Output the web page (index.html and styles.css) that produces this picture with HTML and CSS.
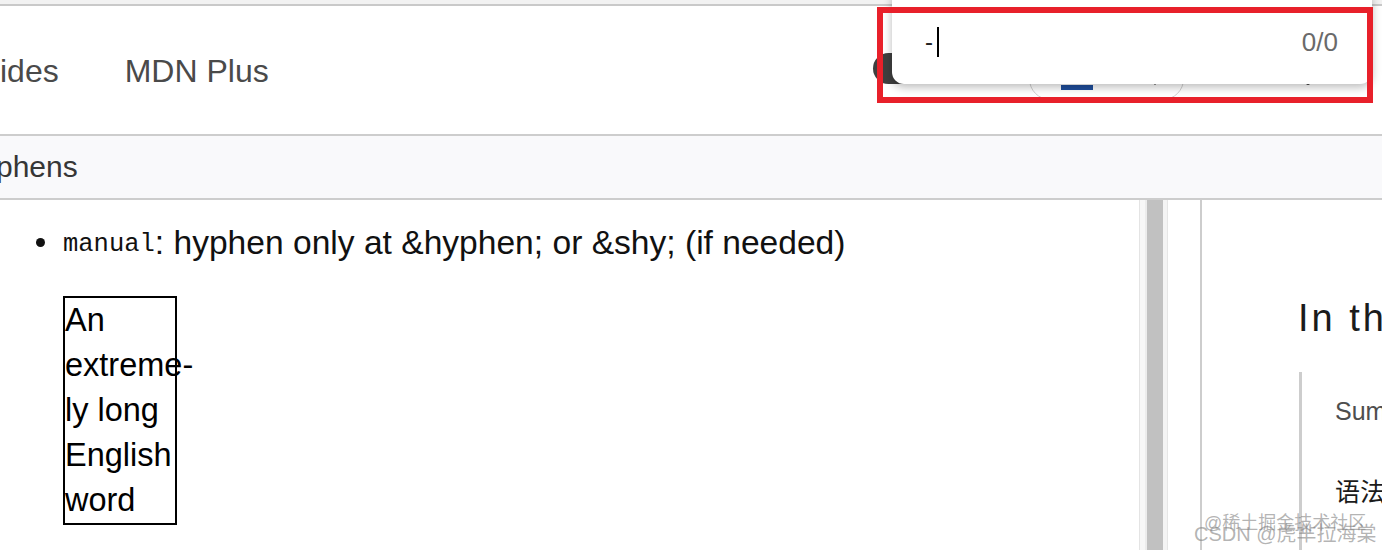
FILE: index.html
```html
<!DOCTYPE html>
<html lang="zh-CN">
<head>
<meta charset="utf-8">
<title>hyphens</title>
<link rel="stylesheet" href="styles.css">
</head>
<body>
<div class="page">
  <div class="topstrip"></div>
  <header class="header">
    <nav class="nav">
      <a class="nav-item">ides</a>
      <a class="nav-item plus">MDN Plus</a>
    </nav>
    <div class="theme-btn"></div>
    <div class="lang-pill"><span class="flag-bar"></span><span class="pill-dot"></span></div>
    <span class="user-dot"></span>
  </header>
  <div class="crumbbar"><span class="crumb">phens</span></div>
  <main class="main">
    <section class="content">
      <ul class="list">
        <li class="item"><span class="bullet"></span><code class="code">manual</code><span>: hyphen only at &amp;hyphen; or &amp;shy; (if needed)</span></li>
      </ul>
      <div class="demo">An extreme&shy;ly long English word</div>
    </section>
    <div class="scrollbar"><span class="sb-track"></span><span class="sb-thumb"></span><span class="sb-edge"></span></div>
    <aside class="sidebar">
      <h2 class="toc-title">In this article</h2>
      <ul class="toc">
        <li class="toc-item">Summary</li>
        <li class="toc-item cjk">语法</li>
      </ul>
    </aside>
  </main>

  <div class="findbar">
    <span class="find-text">-</span><span class="caret"></span>
    <span class="find-count">0/0</span>
  </div>
  <div class="highlight"></div>
  <div class="watermark">
    <span class="wm wm1">@稀土掘金技术社区</span>
    <span class="wm wm2">CSDN @虎芈拉海棠</span>
  </div>
</div>
</body>
</html>
```
FILE: styles.css
```css
* { box-sizing: border-box; }
html, body { margin: 0; padding: 0; }
body {
  width: 1382px;
  height: 550px;
  overflow: hidden;
  background: #ffffff;
  font-family: "Liberation Sans", Arial, "Noto Sans CJK SC", sans-serif;
  color: #1b1b1b;
}
.page { position: relative; width: 1382px; height: 550px; overflow: hidden; }

.topstrip {
  height: 6px;
  background: #f2f2f2;
  border-bottom: 2px solid #c9c9c9;
}

.header {
  height: 130px;
  border-bottom: 2px solid #cdcdcd;
  display: flex;
  align-items: center;
}
.nav { display: flex; align-items: center; gap: 66px; }
.nav-item {
  font-size: 32px;
  color: #4a4a4a;
  text-decoration: none;
  margin-top: 2px;
}
.theme-btn {
  margin-left: 604px;
  width: 44px;
  height: 31px;
  border-radius: 16px;
  background: #3f3f3f;
  margin-top: -4px;
}
.lang-pill {
  margin-left: 112px;
  width: 155px;
  height: 42px;
  border: 1.5px solid #cfcfcf;
  border-radius: 21px;
  display: flex;
  align-items: flex-end;
  margin-top: 18px;
  padding-left: 31px;
}
.flag-bar {
  width: 32px;
  height: 5px;
  background: #1f4e9c;
  margin-bottom: 9px;
}
.pill-dot {
  width: 2px;
  height: 2px;
  background: #999;
  margin-left: 61px;
  margin-bottom: 14px;
}
.user-dot {
  margin-left: 122px;
  width: 4px;
  height: 4px;
  border-radius: 50%;
  background: #333;
  margin-top: 26px;
}

.crumbbar {
  height: 64px;
  background: #f9f9fb;
  border-bottom: 2px solid #cdcdcd;
  line-height: 62px;
}
.crumb {
  display: inline-block;
  margin-left: -4px;
  font-size: 30px;
  color: #363636;
}

.main { display: flex; height: 350px; }
.content { width: 1139px; flex: 0 0 1139px; }
.list { list-style: none; margin: 18px 0 0 0; padding: 0; }
.item {
  display: flex;
  align-items: center;
  line-height: 45px;
  font-size: 33.6px;
  color: #111;
  white-space: nowrap;
}
.bullet {
  width: 9px;
  height: 9px;
  border-radius: 50%;
  background: #111;
  margin-left: 36px;
  margin-right: 18px;
}
.code {
  font-family: "Liberation Mono", "Courier New", monospace;
  font-size: 25.5px;
  margin-top: 4px;
}
.demo {
  margin: 29px 0 0 63px;
  width: 114px;
  border: 2px solid #000;
  font-size: 32.5px;
  line-height: 45px;
  color: #000;
  hyphens: manual;
  -webkit-hyphens: manual;
}

.scrollbar { width: 29px; flex: 0 0 29px; display: flex; }
.sb-track {
  width: 8px;
  border-left: 1px solid #e4e4e4;
  border-right: 2px solid #ececec;
  background: #f7f7f7;
}
.sb-thumb { width: 16px; background: #c1c1c1; }
.sb-edge { width: 5px; background: #f4f4f4; border-right: 1px solid #e6e6e6; }

.sidebar {
  margin-left: 32px;
  border-left: 2px solid #cdcdcd;
  padding-left: 96px;
  flex: 1 1 auto;
  min-width: 0;
  overflow: hidden;
}
.toc-title {
  margin: 94px 0 0 0;
  font-size: 38px;
  line-height: 48px;
  font-weight: normal;
  letter-spacing: 3px;
  white-space: nowrap;
  color: #1b1b1b;
}
.toc {
  list-style: none;
  margin: 30px 0 0 1px;
  padding: 24px 0 0 33px;
  border-left: 3px solid #cdcdcd;
  height: 200px;
}
.toc-item {
  font-size: 25px;
  line-height: 30px;
  color: #4e4e4e;
  white-space: nowrap;
  margin-bottom: 49px;
}
.toc-item.cjk {
  font-family: "Noto Sans CJK SC", sans-serif;
  color: #1b1b1b;
}

.findbar {
  position: absolute;
  left: 892px;
  top: -12px;
  width: 480px;
  height: 96px;
  background: #ffffff;
  border-radius: 12px;
  box-shadow: 0 3px 10px rgba(0,0,0,0.28);
  display: flex;
  align-items: center;
  padding: 12px 34px 0 33px;
}
.find-text { font-size: 24px; color: #222; }
.caret { width: 2px; height: 30px; background: #000; margin-left: 4px; }
.find-count { margin-left: auto; font-size: 26px; color: #6a6a6a; }

.highlight {
  position: absolute;
  left: 877px;
  top: 7px;
  width: 496px;
  height: 96px;
  border: 6px solid #e8202a;
}

.watermark {
  position: absolute;
  left: 1194px;
  top: 508px;
  width: 180px;
  height: 42px;
}
.wm {
  position: absolute;
  white-space: nowrap;
  font-family: "Liberation Sans", "Noto Sans CJK SC", sans-serif;
  color: rgba(130,130,130,0.6);
}
.wm1 { left: 10px; top: 0; font-size: 18px; }
.wm2 { left: 0; top: 10px; font-size: 20px; }
```
